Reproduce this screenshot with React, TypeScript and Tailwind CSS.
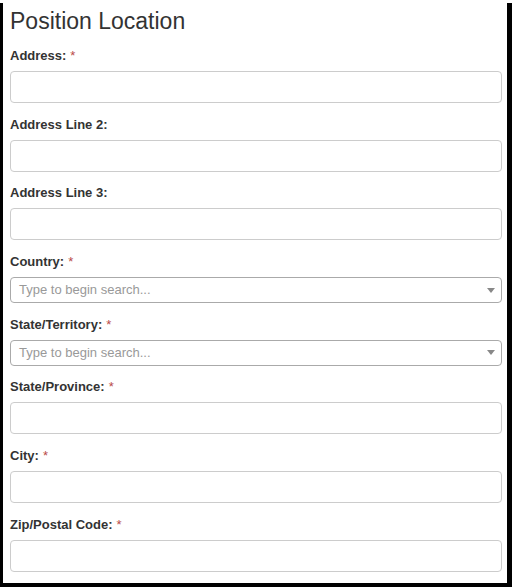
import React from 'react'

type Field = {
  label: string
  required?: boolean
  kind: 'text' | 'search'
}

const fields: Field[] = [
  { label: 'Address:', required: true, kind: 'text' },
  { label: 'Address Line 2:', kind: 'text' },
  { label: 'Address Line 3:', kind: 'text' },
  { label: 'Country:', required: true, kind: 'search' },
  { label: 'State/Territory:', required: true, kind: 'search' },
  { label: 'State/Province:', required: true, kind: 'text' },
  { label: 'City:', required: true, kind: 'text' },
  { label: 'Zip/Postal Code:', required: true, kind: 'text' },
]

function FormGroup({ label, required, kind }: Field) {
  return (
    <div className="flex flex-col mb-[11.7px]">
      <label className="h-[20px] leading-[20px] text-[13px] font-bold text-[#333] mb-[5px]">
        {label}
        {required && <span className="ml-[4px] font-normal text-[#b94a48]">*</span>}
      </label>
      {kind === 'text' ? (
        <input
          type="text"
          className="h-[32px] w-full rounded-[4px] border border-[#ccc] bg-white px-3 text-[13px] outline-none"
        />
      ) : (
        <div className="flex h-[26px] w-full items-center justify-between rounded-[4px] border border-[#aaa] bg-white pl-[8px] pr-[6px]">
          <span className="text-[13px] text-[#999]">Type to begin search...</span>
          <span className="h-0 w-0 border-x-[4px] border-t-[5px] border-x-transparent border-t-[#888]" />
        </div>
      )}
    </div>
  )
}

export default function App() {
  return (
    <div className="h-[587px] w-[512px] bg-black" style={{ fontFamily: '"Liberation Sans", Arial, sans-serif' }}>
      <div className="ml-[3px] mt-[3px] h-[580px] w-[504px] overflow-hidden bg-white pl-[7px] pr-[5px] pt-[3px]">
        <h2 className="h-[30px] leading-[30px] text-[23px] text-[#333]">Position Location</h2>
        <form className="mt-[10px] flex flex-col">
          {fields.map((f) => (
            <FormGroup key={f.label} {...f} />
          ))}
        </form>
      </div>
    </div>
  )
}
